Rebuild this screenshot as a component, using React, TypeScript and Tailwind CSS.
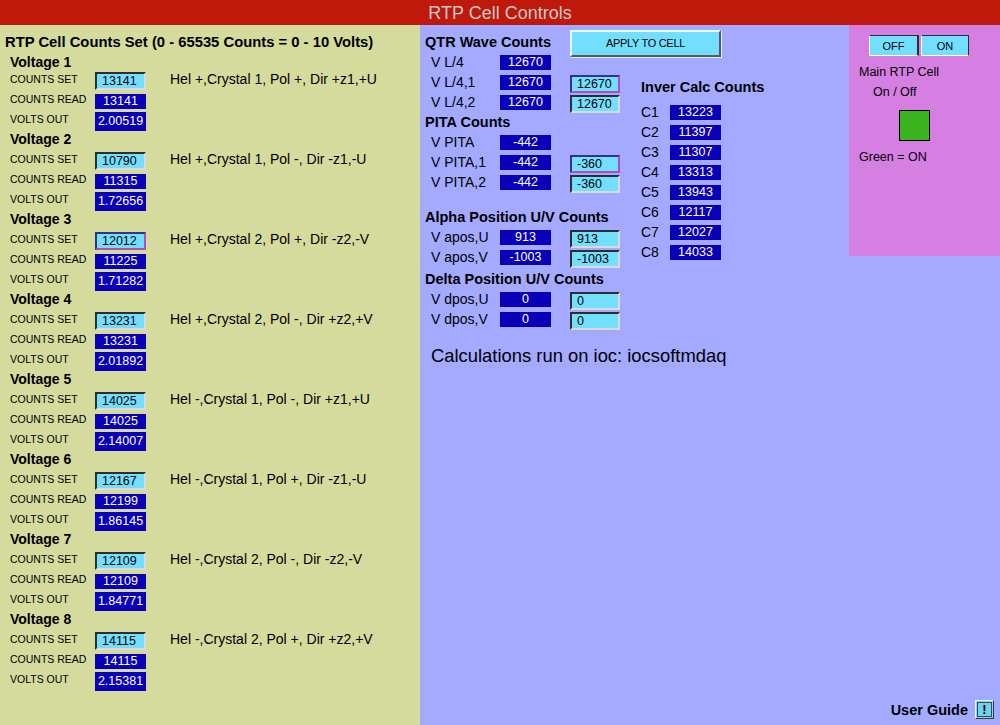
import React from "react";

type Group = { n: number; set: string; read: string; volts: string; desc: string; hi?: boolean };

const groups: Group[] = [
  { n: 1, set: "13141", read: "13141", volts: "2.00519", desc: "Hel +,Crystal 1, Pol +, Dir +z1,+U" },
  { n: 2, set: "10790", read: "11315", volts: "1.72656", desc: "Hel +,Crystal 1, Pol -, Dir -z1,-U" },
  { n: 3, set: "12012", read: "11225", volts: "1.71282", desc: "Hel +,Crystal 2, Pol +, Dir -z2,-V", hi: true },
  { n: 4, set: "13231", read: "13231", volts: "2.01892", desc: "Hel +,Crystal 2, Pol -, Dir +z2,+V" },
  { n: 5, set: "14025", read: "14025", volts: "2.14007", desc: "Hel -,Crystal 1, Pol -, Dir +z1,+U" },
  { n: 6, set: "12167", read: "12199", volts: "1.86145", desc: "Hel -,Crystal 1, Pol +, Dir -z1,-U" },
  { n: 7, set: "12109", read: "12109", volts: "1.84771", desc: "Hel -,Crystal 2, Pol -, Dir -z2,-V" },
  { n: 8, set: "14115", read: "14115", volts: "2.15381", desc: "Hel -,Crystal 2, Pol +, Dir +z2,+V" },
];

function Input({ v, hi, w }: { v: string; hi?: boolean; w: string }) {
  const border = hi
    ? "border-t-[#343386] border-l-[#343386] border-b-[#ae4ebc] border-r-[#ae4ebc]"
    : "border-t-[#2d2d2d] border-l-[#2d2d2d] border-b-[#dadada] border-r-[#dadada]";
  return (
    <div
      className={`${w} h-[18px] shrink-0 border-2 ${border} bg-[#73dfff] pl-[5px] text-[12.5px] leading-[14px] text-black`}
    >
      {v}
    </div>
  );
}

function Val({ v, h, mt }: { v: string; h: string; mt?: string }) {
  return (
    <div
      className={`w-[51px] ${h} ${mt ?? ""} flex shrink-0 items-center justify-center bg-[#0a00b8] text-[12.5px] text-white`}
    >
      {v}
    </div>
  );
}

function VoltGroup({ g }: { g: Group }) {
  return (
    <div className="flex flex-col">
      <div
        className={`h-[20px] pl-[10px] text-[14px] font-bold leading-[14px] ${g.n === 1 ? "pt-[3px]" : ""}`}
      >
        Voltage {g.n}
      </div>
      <div className="flex h-[20px] items-start pl-[10px]">
        <span className="w-[85px] shrink-0 text-[10.5px] leading-[14px]">COUNTS SET</span>
        <Input v={g.set} hi={g.hi} w="w-[51px]" />
        <span className="ml-[24px] whitespace-nowrap text-[14px] leading-[14px]">{g.desc}</span>
      </div>
      <div className="flex h-[20px] items-start pl-[10px]">
        <span className="w-[85px] shrink-0 text-[10.5px] leading-[14px]">COUNTS READ</span>
        <Val v={g.read} h="h-[15px]" mt="mt-[2px]" />
      </div>
      <div className="flex h-[20px] items-start pl-[10px]">
        <span className="w-[85px] shrink-0 text-[10.5px] leading-[14px]">VOLTS OUT</span>
        <Val v={g.volts} h="h-[19px]" />
      </div>
    </div>
  );
}

function RRow({ label, val, inp, hi }: { label: string; val: string; inp?: string; hi?: boolean }) {
  return (
    <div className="flex h-[20px] items-start pl-[11px]">
      <span className="w-[69px] shrink-0 whitespace-nowrap text-[14px] leading-[14px]">{label}</span>
      <Val v={val} h="h-[15px]" />
      {inp !== undefined && (
        <div className="ml-[19px]">
          <Input v={inp} hi={hi} w="w-[50px]" />
        </div>
      )}
    </div>
  );
}

function RHead({ text, h }: { text: string; h: string }) {
  return (
    <div className={`flex ${h} items-end pb-[6px] pl-[5px] text-[14.5px] font-bold leading-[14px] whitespace-nowrap`}>
      {text}
    </div>
  );
}

export default function App() {
  const calc = [
    ["C1", "13223"],
    ["C2", "11397"],
    ["C3", "11307"],
    ["C4", "13313"],
    ["C5", "13943"],
    ["C6", "12117"],
    ["C7", "12027"],
    ["C8", "14033"],
  ];
  return (
    <div className="flex h-[725px] w-[1000px] flex-col overflow-hidden font-['Liberation_Sans',Arial,sans-serif] text-black">
      <div className="flex h-[25px] shrink-0 items-center justify-center bg-[#be190b] text-[18px] leading-[20px] text-[#c8c8c8]">
        RTP Cell Controls
      </div>
      <div className="flex min-h-0 flex-1">
        {/* Left panel */}
        <div className="flex w-[420px] shrink-0 flex-col bg-[#d4db9d]">
          <div className="h-[27px] whitespace-nowrap pl-[5px] pt-[9px] text-[14.8px] font-bold leading-[17px]">
            RTP Cell Counts Set (0 - 65535 Counts = 0 - 10 Volts)
          </div>
          {groups.map((g) => (
            <VoltGroup key={g.n} g={g} />
          ))}
        </div>

        {/* Right panel */}
        <div className="flex flex-1 flex-col bg-[#a4aaff]">
          <div className="flex">
            {/* Column A */}
            <div className="flex w-[220px] shrink-0 flex-col">
              <div className="flex h-[30px] items-start">
                <div className="w-[150px] shrink-0">
                  <RHead text="QTR Wave Counts" h="h-[30px]" />
                </div>
                <div className="mt-[5px] flex h-[27px] w-[151px] shrink-0 items-center justify-center border-2 border-t-[#e6fbff] border-l-[#e6fbff] border-b-[#5a5a5a] border-r-[#5a5a5a] bg-[#73dfff] text-[11px] tracking-[-0.3px] shadow-[1px_1px_0_#d2f2ff]">
                  APPLY TO CELL
                </div>
              </div>
              <RRow label="V L/4" val="12670" />
              <RRow label="V L/4,1" val="12670" inp="12670" hi />
              <RRow label="V L/4,2" val="12670" inp="12670" />
              <RHead text="PITA Counts" h="h-[20px]" />
              <RRow label="V PITA" val="-442" />
              <RRow label="V PITA,1" val="-442" inp="-360" hi />
              <RRow label="V PITA,2" val="-442" inp="-360" />
              <RHead text="Alpha Position U/V Counts" h="h-[35px]" />
              <RRow label="V apos,U" val="913" inp="913" />
              <RRow label="V apos,V" val="-1003" inp="-1003" />
              <RHead text="Delta Position U/V Counts" h="h-[22px]" />
              <RRow label="V dpos,U" val="0" inp="0" />
              <RRow label="V dpos,V" val="0" inp="0" />
              <div className="mt-[14px] whitespace-nowrap pl-[11px] text-[18.4px] leading-[20px]">
                Calculations run on ioc: iocsoftmdaq
              </div>
            </div>

            {/* Column B */}
            <div className="flex w-[209px] shrink-0 flex-col pt-[55px]">
              <div className="pl-[1px] text-[14.5px] font-bold leading-[14px] whitespace-nowrap">Inver Calc Counts</div>
              <div className="mt-[11px] flex flex-col">
                {calc.map(([c, v]) => (
                  <div key={c} className="flex h-[20px] items-start">
                    <span className="w-[30px] shrink-0 pl-[1px] text-[14px] leading-[14px]">{c}</span>
                    <Val v={v} h="h-[15px]" />
                  </div>
                ))}
              </div>
            </div>

            {/* Pink panel */}
            <div className="flex h-[231px] w-[151px] shrink-0 flex-col bg-[#d67fe2] pt-[10px]">
              <div className="flex gap-[2px] pl-[20px]">
                <div className="flex h-[21px] w-[50px] items-center justify-center border-t border-l border-b border-r-2 border-t-[#2d2d2d] border-l-white border-b-white border-r-[#2d2d2d] bg-[#73dfff] text-[11px] leading-[12px]">
                  OFF
                </div>
                <div className="flex h-[21px] w-[48px] items-center justify-center border border-t-[#2d2d2d] border-l-white border-b-white border-r-[#2d2d2d] bg-[#73dfff] text-[11px] leading-[12px]">
                  ON
                </div>
              </div>
              <div className="mt-[9px] pl-[10px] text-[12.5px] leading-[14px]">Main RTP Cell</div>
              <div className="mt-[6px] pl-[24px] text-[12.5px] leading-[14px]">On / Off</div>
              <div className="ml-[50px] mt-[11px] h-[31px] w-[31px] border border-black bg-[#3cb420]" />
              <div className="mt-[9px] pl-[10px] text-[12.5px] leading-[14px]">Green = ON</div>
            </div>
          </div>

          <div className="mt-auto flex items-center justify-end gap-[7px] pb-[6px] pr-[6px]">
            <span className="text-[14.5px] font-bold leading-[16px]">User Guide</span>
            <div className="flex h-[19px] w-[19px] items-center justify-center border border-t-[#e6fbff] border-l-[#e6fbff] border-b-[#3a3a3a] border-r-[#3a3a3a] bg-[#73dfff]">
              <div className="flex h-[15px] w-[15px] items-center justify-center border border-[#464646] bg-[#6fd2f0] text-[13px] font-bold leading-[13px]">
                !
              </div>
            </div>
          </div>
        </div>
      </div>
    </div>
  );
}
